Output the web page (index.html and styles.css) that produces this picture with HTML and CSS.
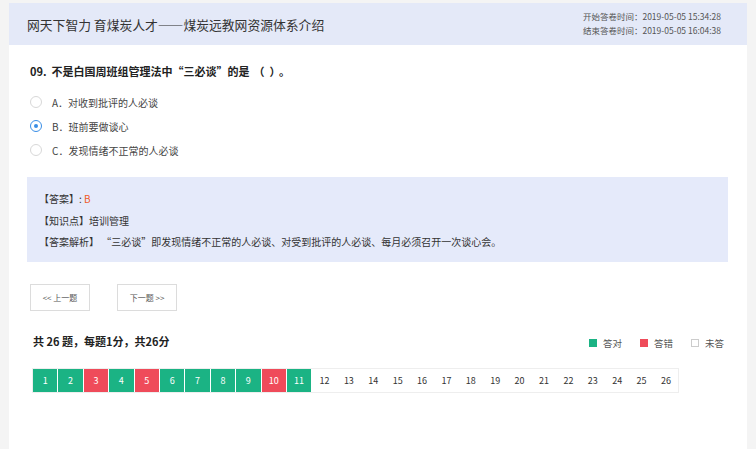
FILE: index.html
```html
<!DOCTYPE html>
<html lang="zh">
<head>
    <meta charset="UTF-8">
    <title>答卷详情</title>
    <link rel="stylesheet" href="styles.css">
</head>
<body>
    <div class="page">
        <div class="header">
            <div class="title">网天下智力 育煤炭人才——煤炭远教网资源体系介绍</div>
            <div class="times">
                <div>开始答卷时间：2019-05-05 15:34:28</div>
                <div>结束答卷时间：2019-05-05 16:04:38</div>
            </div>
        </div>
        <div class="content">
            <div class="question">09.&nbsp; 不是白国周班组管理法中“三必谈”的是<span class="blank">（&nbsp;&nbsp;）</span>。</div>
            <div class="options">
                <div class="option"><span class="radio"></span>A．对收到批评的人必谈</div>
                <div class="option"><span class="radio checked"></span>B．班前要做谈心</div>
                <div class="option"><span class="radio"></span>C．发现情绪不正常的人必谈</div>
            </div>
            <div class="answer-box">
                <div>【答案】: <span class="answer">B</span></div>
                <div>【知识点】培训管理</div>
                <div>【答案解析】 “三必谈”即发现情绪不正常的人必谈、对受到批评的人必谈、每月必须召开一次谈心会。</div>
            </div>
            <div class="nav">
                <button class="nav-btn">&lt;&lt; 上一题</button>
                <button class="nav-btn">下一题 &gt;&gt;</button>
            </div>
            <div class="summary">
                <div class="total">共 26 题，每题1分，共26分</div>
                <div class="legend">
                    <span class="item"><i class="sq right"></i>答对</span>
                    <span class="item"><i class="sq wrong"></i>答错</span>
                    <span class="item"><i class="sq none"></i>未答</span>
                </div>
            </div>
            <div class="cells" id="cells"></div>
        </div>
    </div>
    <script>
        var states = ["r","r","w","r","w","r","r","r","r","w","r"];
        var box = document.getElementById("cells");
        for (var i = 1; i <= 26; i++) {
            var c = document.createElement("span");
            var s = states[i - 1];
            c.className = "cell" + (s === "r" ? " right" : s === "w" ? " wrong" : "");
            c.textContent = i;
            box.appendChild(c);
        }
    </script>
</body>
</html>
```

FILE: styles.css
```css
body {
    margin: 0;
    background-color: #f4f4f4;
    font-family: "Noto Sans CJK SC", "Noto Sans", sans-serif;
    color: #333;
}
.page {
    margin: 3px 9px 0 9px;
    background-color: #fff;
    height: 446px;
}
.header {
    height: 42px;
    background-color: #e4e9f8;
    display: flex;
    justify-content: space-between;
    align-items: center;
    padding: 0 26px 0 18px;
}
.title {
    font-size: 12.8px;
    color: #333;
}
.times {
    font-size: 8.5px;
    color: #555;
    line-height: 14px;
    margin-top: -2px;
}
.content {
    padding: 18px 19px 0 18px;
}
.question {
    font-size: 11px;
    font-weight: bold;
    color: #222;
    margin-left: 3px;
    line-height: 16px;
}
.blank {
    margin: 0 4px 0 4px;
}
.options {
    margin-top: 11px;
    margin-left: 3px;
}
.option {
    display: flex;
    align-items: center;
    height: 24px;
    font-size: 10px;
    color: #444;
}
.radio {
    width: 10px;
    height: 10px;
    border: 1px solid #d8d8d8;
    border-radius: 50%;
    margin-right: 10px;
    position: relative;
    box-sizing: content-box;
}
.radio.checked {
    border-color: #3a8ee6;
}
.radio.checked::after {
    content: "";
    position: absolute;
    left: 3px;
    top: 3px;
    width: 4px;
    height: 4px;
    border-radius: 50%;
    background-color: #3a8ee6;
}
.answer-box {
    margin-top: 15px;
    background-color: #e5eafa;
    padding: 11px 13px 11px 12px;
    font-size: 10px;
    color: #333;
    line-height: 21.5px;
    height: 63px;
}
.answer {
    color: #f05a28;
}
.nav {
    display: flex;
    gap: 27px;
    margin-top: 22px;
    margin-left: 3px;
}
.nav-btn {
    width: 60px;
    height: 27px;
    border: 1px solid #dcdcdc;
    background-color: #fff;
    font-family: inherit;
    font-size: 8px;
    color: #555;
    padding: 0;
}
.summary {
    display: flex;
    justify-content: space-between;
    align-items: center;
    margin-top: 21px;
    padding-left: 6px;
    padding-right: 4px;
}
.total {
    font-size: 11px;
    font-weight: bold;
    color: #222;
}
.legend {
    display: flex;
    gap: 18px;
    font-size: 9.5px;
    color: #555;
    margin-top: 4px;
}
.item {
    display: flex;
    align-items: center;
}
.sq {
    display: inline-block;
    width: 8px;
    height: 8px;
    margin-right: 6px;
    box-sizing: border-box;
}
.sq.right {
    background-color: #1bb384;
}
.sq.wrong {
    background-color: #ef4b5a;
}
.sq.none {
    border: 1px solid #ccc;
}
.cells {
    display: flex;
    margin-top: 18px;
    margin-left: 5px;
    width: 647px;
    height: 25px;
    border: 1px solid #eee;
    box-sizing: border-box;
}
.cell {
    flex: 1;
    display: flex;
    align-items: center;
    justify-content: center;
    font-size: 9px;
    color: #333;
}
.cell.right,
.cell.wrong {
    color: #fff;
    border-right: 1px solid #fff;
}
.cell.right {
    background-color: #1bb384;
}
.cell.wrong {
    background-color: #ef4b5a;
}
```
